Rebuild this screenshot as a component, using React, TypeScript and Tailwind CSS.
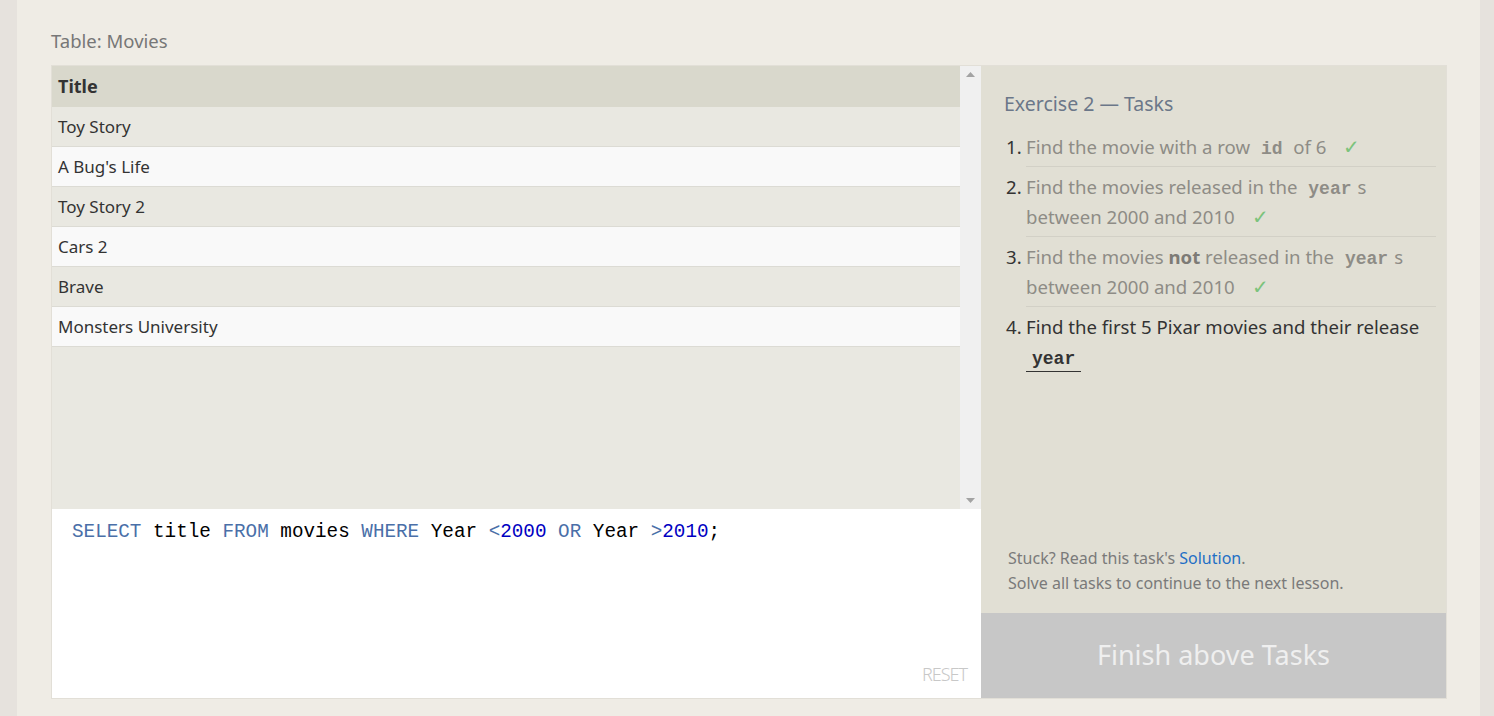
import React from "react";

const movies = [
  "Toy Story",
  "A Bug's Life",
  "Toy Story 2",
  "Cars 2",
  "Brave",
  "Monsters University",
];

const sans = "font-['Noto_Sans',sans-serif]";

const Check = () => <span className="ml-3 text-[20px] leading-none text-[#7cc37c]">✓</span>;

const Code = ({ children, dark }: { children: React.ReactNode; dark?: boolean }) => (
  <code
    className={`mx-1.5 font-['Liberation_Mono',monospace] font-bold text-[18px] leading-none ${
      dark ? "text-[#333]" : "text-[#8e8c86]"
    }`}
  >
    {children}
  </code>
);

export default function App() {
  return (
    <div className={`flex h-[716px] w-full bg-[#efece5] ${sans}`}>
      <div className="w-[17px] bg-[#e6e2dd]" />
      <div className="flex-1 pl-[34px] pr-[33px] pt-[28px]">
        <div className="text-[18.5px] text-[#777] leading-[26px] mb-[11px]">Table: Movies</div>

        <div className="flex h-[634px] border border-[#e2dfd7]">
          {/* left side: results + editor */}
          <div className="flex w-[929px] flex-col">
            <div className="flex h-[443px]">
              <div className="flex-1 bg-[#e9e8e1]">
                <div className="h-[41px] bg-[#d9d8cc] px-[6px] flex items-center text-[18px] font-bold text-[#333]">
                  Title
                </div>
                {movies.map((m, i) => (
                  <div
                    key={m}
                    className={`h-[40px] px-[6px] flex items-center text-[17px] text-[#333] border-b border-[#dcdbd4] ${
                      i % 2 === 0 ? "bg-[#e9e8e1]" : "bg-[#f9f9f9]"
                    }`}
                  >
                    {m}
                  </div>
                ))}
              </div>
              <div className="w-[21px] bg-[#f0f0f0] flex flex-col items-center justify-between py-[6px]">
                <svg width="9" height="5" viewBox="0 0 9 5">
                  <path d="M0 5 L4.5 0 L9 5 Z" fill="#a3a3a3" />
                </svg>
                <svg width="9" height="5" viewBox="0 0 9 5">
                  <path d="M0 0 L4.5 5 L9 0 Z" fill="#a3a3a3" />
                </svg>
              </div>
            </div>
            <div className="flex-1 bg-white relative px-[20px] pt-[10px]">
              <div className="font-['Liberation_Mono',monospace] text-[19.3px] leading-[26px] text-black whitespace-pre">
                <span className="text-[#4a6fa8]">SELECT</span> title{" "}
                <span className="text-[#4a6fa8]">FROM</span> movies{" "}
                <span className="text-[#4a6fa8]">WHERE</span> Year{" "}
                <span className="text-[#4a6fa8]">&lt;</span>
                <span className="text-[#0000c2]">2000</span>{" "}
                <span className="text-[#4a6fa8]">OR</span> Year{" "}
                <span className="text-[#4a6fa8]">&gt;</span>
                <span className="text-[#0000c2]">2010</span>;
              </div>
              <div className="absolute right-[14px] bottom-[10px] text-[18px] font-light tracking-[-1px] text-[#c8c8c8]">
                RESET
              </div>
            </div>
          </div>

          {/* right side: tasks */}
          <div className="flex flex-1 flex-col bg-[#e1dfd4]">
            <div className="flex-1 pl-[22px] pr-[10px] pt-[25px]">
              <div className="text-[19.5px] text-[#6b7789] leading-[26px] mb-[15px] pl-px">Exercise 2 — Tasks</div>
              <ol className="text-[18.6px] leading-[30px]">
                <li className="flex">
                  <span className="w-[23px] shrink-0 pl-[3px] text-[#333]">1.</span>
                  <span className="flex-1 border-b border-[#d2d0c6] pb-[4px] text-[#8e8c86]">
                    Find the movie with a row <Code>id</Code> of 6 <Check />
                  </span>
                </li>
                <li className="flex pt-[5px]">
                  <span className="w-[23px] shrink-0 pl-[3px] text-[#333]">2.</span>
                  <span className="flex-1 border-b border-[#d2d0c6] pb-[4px] text-[#8e8c86]">
                    Find the movies released in the <Code>year</Code>s between 2000 and 2010 <Check />
                  </span>
                </li>
                <li className="flex pt-[5px]">
                  <span className="w-[23px] shrink-0 pl-[3px] text-[#333]">3.</span>
                  <span className="flex-1 border-b border-[#d2d0c6] pb-[4px] text-[#8e8c86]">
                    Find the movies <b className="text-[#7d7b76]">not</b> released in the <Code>year</Code>s between
                    2000 and 2010 <Check />
                  </span>
                </li>
                <li className="flex pt-[5px]">
                  <span className="w-[23px] shrink-0 pl-[3px] text-[#333]">4.</span>
                  <span className="flex-1 text-[#333]">
                    Find the first 5 Pixar movies and their release{" "}
                    <span className="inline-block border-b border-[#333] leading-[28px]">
                      <Code dark>year</Code>
                    </span>
                  </span>
                </li>
              </ol>
            </div>
            <div className="pl-[27px] pb-[17px] text-[16px] leading-[25px] text-[#7a7a7a]">
              <div>
                Stuck? Read this task's <span className="text-[#1f6fc5]">Solution</span>.
              </div>
              <div>Solve all tasks to continue to the next lesson.</div>
            </div>
            <div className="h-[85px] bg-[#c7c7c7] flex items-center justify-center text-[27px] text-[#efefef]">
              Finish above Tasks
            </div>
          </div>
        </div>
      </div>
      <div className="w-[14px] bg-[#e6e2dd]" />
    </div>
  );
}
